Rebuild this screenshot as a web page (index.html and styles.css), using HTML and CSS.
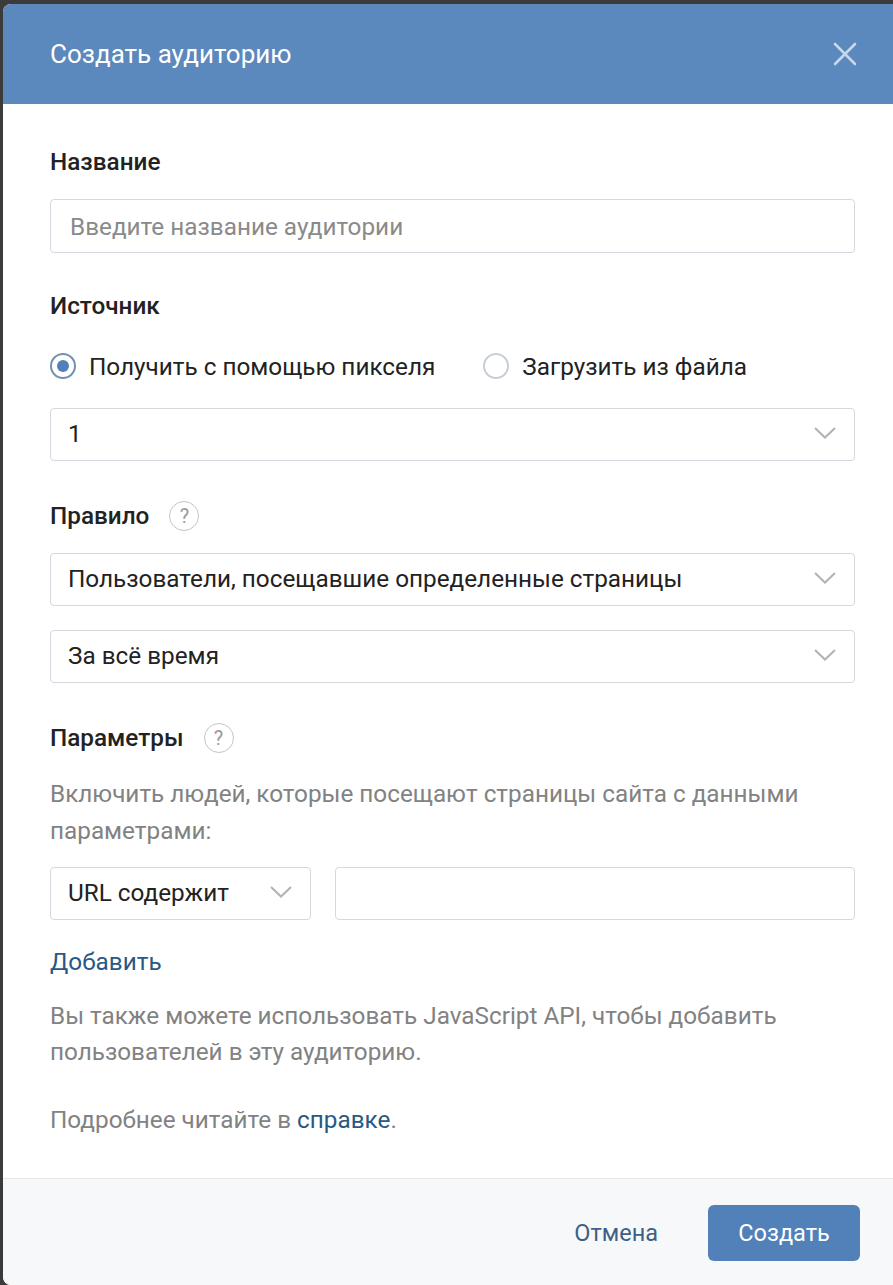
FILE: index.html
```html
<!DOCTYPE html>
<html lang="ru">
<head>
  <meta charset="UTF-8">
  <title>Создать аудиторию</title>
  <link rel="stylesheet" href="styles.css">
</head>
<body>
  <div class="modal">
    <div class="modal-header">
      <h2 class="modal-title">Создать аудиторию</h2>
      <button class="close-btn" type="button" aria-label="Закрыть">
        <svg width="24" height="24" viewBox="0 0 24 24"><path d="M2 2 L22 22 M22 2 L2 22" stroke="currentColor" stroke-width="2.6" stroke-linecap="round" fill="none"/></svg>
      </button>
    </div>

    <div class="modal-body">
      <div class="field-label">Название</div>
      <input class="text-input" type="text" placeholder="Введите название аудитории">

      <div class="field-label section">Источник</div>
      <div class="radio-row">
        <label class="radio checked"><span class="radio-mark"></span>Получить с помощью пикселя</label>
        <label class="radio"><span class="radio-mark"></span>Загрузить из файла</label>
      </div>
      <div class="select">
        <span>1</span>
        <svg class="chevron" width="22" height="12" viewBox="0 0 22 12"><path d="M1 1 L11 10.5 L21 1" stroke="currentColor" stroke-width="2" fill="none"/></svg>
      </div>

      <div class="field-label section with-hint">Правило <span class="hint">?</span></div>
      <div class="select">
        <span>Пользователи, посещавшие определенные страницы</span>
        <svg class="chevron" width="22" height="12" viewBox="0 0 22 12"><path d="M1 1 L11 10.5 L21 1" stroke="currentColor" stroke-width="2" fill="none"/></svg>
      </div>
      <div class="select second">
        <span>За всё время</span>
        <svg class="chevron" width="22" height="12" viewBox="0 0 22 12"><path d="M1 1 L11 10.5 L21 1" stroke="currentColor" stroke-width="2" fill="none"/></svg>
      </div>

      <div class="field-label section with-hint">Параметры <span class="hint">?</span></div>
      <p class="muted desc">Включить людей, которые посещают страницы сайта с данными параметрами:</p>
      <div class="param-row">
        <div class="select small">
          <span>URL содержит</span>
          <svg class="chevron" width="22" height="12" viewBox="0 0 22 12"><path d="M1 1 L11 10.5 L21 1" stroke="currentColor" stroke-width="2" fill="none"/></svg>
        </div>
        <input class="text-input grow" type="text">
      </div>
      <a class="link add-link" href="#">Добавить</a>

      <p class="muted note">Вы также можете использовать JavaScript API, чтобы добавить пользователей в эту аудиторию.</p>
      <p class="muted more">Подробнее читайте в <a class="link" href="#">справке</a>.</p>
    </div>

    <div class="modal-footer">
      <a class="cancel" href="#">Отмена</a>
      <button class="primary-btn" type="button">Создать</button>
    </div>
  </div>
</body>
</html>
```

FILE: styles.css
```css
:root {
  --blue: #5b88bd;
  --btn-blue: #5181b8;
  --link: #2a5885;
  --border: #d3d9de;
  --text: #222222;
  --muted: #828282;
}

html, body {
  height: 100%;
}

body {
  margin: 0;
  padding: 4px 0 0 3px;
  box-sizing: border-box;
  background: #3b3b3b;
  font-family: Roboto, "Noto Sans", Arial, sans-serif;
  color: var(--text);
  overflow: hidden;
}

.modal {
  background: #ffffff;
  border-radius: 8px 0 0 8px;
  overflow: hidden;
  min-height: 1281px;
  display: flex;
  flex-direction: column;
}

.modal-header {
  height: 100px;
  background: var(--blue);
  display: flex;
  align-items: center;
  justify-content: space-between;
  padding: 0 36px 0 47px;
}

.modal-title {
  margin: 0;
  font-size: 26px;
  font-weight: 400;
  color: #ffffff;
}

.close-btn {
  border: none;
  background: none;
  padding: 0;
  color: #c9d7ea;
  cursor: pointer;
  display: flex;
}

.modal-body {
  flex: 1;
  padding: 45px 38px 40px 47px;
  font-size: 24.3px;
}

.field-label {
  font-size: 24.3px;
  line-height: 26px;
  font-weight: 500;
  margin-bottom: 24px;
}

.field-label.section {
  margin-top: 40px;
}

.with-hint {
  display: flex;
  align-items: center;
  height: 30px;
  margin-bottom: 22px;
}

.hint {
  display: inline-flex;
  align-items: center;
  justify-content: center;
  box-sizing: border-box;
  width: 30px;
  height: 30px;
  margin-left: 20px;
  border: 1.5px solid #c4c4c4;
  border-radius: 50%;
  font-size: 20px;
  font-weight: 400;
  color: #9a9a9a;
}

.text-input {
  display: block;
  box-sizing: border-box;
  width: 100%;
  height: 54px;
  padding: 0 19px;
  border: 1.5px solid var(--border);
  border-radius: 4px;
  font-family: inherit;
  font-size: 24.3px;
  color: var(--text);
  outline: none;
}

.text-input::placeholder {
  color: #8a8a8a;
}

.radio-row {
  display: flex;
  gap: 48px;
  margin-top: 34px;
  margin-bottom: 29px;
}

.radio {
  display: flex;
  align-items: center;
  height: 26px;
  font-size: 24.3px;
  cursor: pointer;
}

.radio-mark {
  box-sizing: border-box;
  width: 26px;
  height: 26px;
  margin-right: 13px;
  border: 2px solid #c8ced6;
  border-radius: 50%;
  display: flex;
  align-items: center;
  justify-content: center;
}

.radio.checked .radio-mark {
  border-color: #7390b3;
}

.radio.checked .radio-mark::after {
  content: "";
  width: 12px;
  height: 12px;
  border-radius: 50%;
  background: var(--btn-blue);
}

.select {
  box-sizing: border-box;
  height: 53px;
  display: flex;
  align-items: center;
  justify-content: space-between;
  padding: 0 18px 3px 17px;
  border: 1.5px solid var(--border);
  border-radius: 4px;
  font-size: 24.3px;
}

.select.second {
  margin-top: 24px;
}

.chevron {
  color: #b2b2b2;
}

.desc {
  margin: 20px 0 18px;
  line-height: 37px;
}

.muted {
  color: var(--muted);
  font-size: 24.3px;
}

.param-row {
  display: flex;
  gap: 24px;
}

.select.small {
  width: 261px;
  flex-shrink: 0;
}

.grow {
  flex: 1;
  height: 53px;
}

.link {
  color: var(--link);
  text-decoration: none;
}

.add-link {
  display: block;
  margin-top: 29px;
  line-height: 26px;
}

.note {
  margin: 23px 0 0;
  line-height: 36px;
}

.more {
  margin: 32px 0 0;
  line-height: 36px;
}

.modal-footer {
  border-top: 1.5px solid #e7e8ec;
  background: #f7f8fa;
  height: 107px;
  display: flex;
  align-items: flex-start;
  justify-content: flex-end;
  padding: 26px 33px 0 0;
  box-sizing: border-box;
}

.cancel {
  color: #3f5f86;
  font-size: 23.5px;
  text-decoration: none;
  line-height: 56px;
  margin-right: 50px;
}

.primary-btn {
  height: 56px;
  width: 152px;
  border: none;
  border-radius: 6px;
  background: var(--btn-blue);
  color: #ffffff;
  font-family: inherit;
  font-size: 23.5px;
  cursor: pointer;
}
```
